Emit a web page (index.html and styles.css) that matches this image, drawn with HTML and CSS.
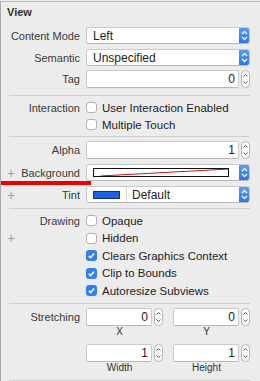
FILE: index.html
```html
<!DOCTYPE html>
<html lang="en">
<head>
    <meta charset="UTF-8">
    <meta name="viewport" content="width=device-width, initial-scale=1.0">
    <title>View Inspector</title>
    <link rel="stylesheet" href="styles.css">
</head>
<body>
    <div class="panel">
        <div class="title">View</div>

        <div class="row mt8">
            <div class="label"><span class="text">Content Mode</span></div>
            <div class="popup">
                <span class="popup-text">Left</span>
                <span class="popup-btn"><svg width="11" height="17" viewBox="0 0 11 17"><path d="M3 7 L5.5 4.5 L8 7 M3 10 L5.5 12.5 L8 10" fill="none" stroke="#fff" stroke-width="1.3"/></svg></span>
            </div>
        </div>

        <div class="row mt5">
            <div class="label"><span class="text">Semantic</span></div>
            <div class="popup">
                <span class="popup-text">Unspecified</span>
                <span class="popup-btn"><svg width="11" height="17" viewBox="0 0 11 17"><path d="M3 7 L5.5 4.5 L8 7 M3 10 L5.5 12.5 L8 10" fill="none" stroke="#fff" stroke-width="1.3"/></svg></span>
            </div>
        </div>

        <div class="row mt4">
            <div class="label"><span class="text">Tag</span></div>
            <div class="number">
                <span class="field">0</span>
                <svg class="stepper" width="9" height="18" viewBox="0 0 9 18"><rect x="0.5" y="0.5" width="8" height="17" rx="4" fill="#fff" stroke="#b3b3b3"/><path d="M2.5 6.5 L4.5 4.5 L6.5 6.5 M2.5 11.5 L4.5 13.5 L6.5 11.5" fill="none" stroke="#555" stroke-width="1"/></svg>
            </div>
        </div>

        <div class="divider mt7"></div>

        <div class="checks mt3">
            <div class="row check-row">
                <div class="label"><span class="text">Interaction</span></div>
                <label class="check"><span class="box"></span>User Interaction Enabled</label>
            </div>
            <div class="row check-row">
                <div class="label"></div>
                <label class="check"><span class="box"></span>Multiple Touch</label>
            </div>
        </div>

        <div class="divider mt3"></div>

        <div class="row mt4">
            <div class="label"><span class="text">Alpha</span></div>
            <div class="number">
                <span class="field">1</span>
                <svg class="stepper" width="9" height="18" viewBox="0 0 9 18"><rect x="0.5" y="0.5" width="8" height="17" rx="4" fill="#fff" stroke="#b3b3b3"/><path d="M2.5 6.5 L4.5 4.5 L6.5 6.5 M2.5 11.5 L4.5 13.5 L6.5 11.5" fill="none" stroke="#555" stroke-width="1"/></svg>
            </div>
        </div>

        <div class="row mt5">
            <div class="label"><span class="plus">+</span><span class="text">Background</span></div>
            <div class="popup">
                <span class="clear-swatch"><svg width="100%" height="100%" viewBox="0 0 100 10" preserveAspectRatio="none"><line x1="5" y1="10" x2="100" y2="0" stroke="#d40000" stroke-width="1.2"/></svg></span>
                <span class="popup-btn"><svg width="11" height="17" viewBox="0 0 11 17"><path d="M3 7 L5.5 4.5 L8 7 M3 10 L5.5 12.5 L8 10" fill="none" stroke="#fff" stroke-width="1.3"/></svg></span>
            </div>
        </div>

        <div class="row mt5">
            <div class="label"><span class="plus">+</span><span class="text">Tint</span></div>
            <div class="popup">
                <span class="tint-cell"><span class="tint-swatch"></span></span>
                <span class="popup-text">Default</span>
                <span class="popup-btn"><svg width="11" height="17" viewBox="0 0 11 17"><path d="M3 7 L5.5 4.5 L8 7 M3 10 L5.5 12.5 L8 10" fill="none" stroke="#fff" stroke-width="1.3"/></svg></span>
            </div>
        </div>

        <div class="divider mt5"></div>

        <div class="checks mt3">
            <div class="row check-row2">
                <div class="label"><span class="text">Drawing</span></div>
                <label class="check"><span class="box"></span>Opaque</label>
            </div>
            <div class="row check-row2">
                <div class="label"><span class="plus">+</span></div>
                <label class="check"><span class="box"></span>Hidden</label>
            </div>
            <div class="row check-row2">
                <div class="label"></div>
                <label class="check"><span class="box on"><svg width="11" height="11" viewBox="0 0 11 11"><path d="M2.8 5.8 L4.6 7.6 L8.2 3.4" fill="none" stroke="#fff" stroke-width="1.6"/></svg></span>Clears Graphics Context</label>
            </div>
            <div class="row check-row2">
                <div class="label"></div>
                <label class="check"><span class="box on"><svg width="11" height="11" viewBox="0 0 11 11"><path d="M2.8 5.8 L4.6 7.6 L8.2 3.4" fill="none" stroke="#fff" stroke-width="1.6"/></svg></span>Clip to Bounds</label>
            </div>
            <div class="row check-row2">
                <div class="label"></div>
                <label class="check"><span class="box on"><svg width="11" height="11" viewBox="0 0 11 11"><path d="M2.8 5.8 L4.6 7.6 L8.2 3.4" fill="none" stroke="#fff" stroke-width="1.6"/></svg></span>Autoresize Subviews</label>
            </div>
        </div>

        <div class="divider mt35"></div>

        <div class="row mt4 stretch-row">
            <div class="label"><span class="text">Stretching</span></div>
            <div class="pair">
                <div class="cell">
                    <div class="number">
                        <span class="field">0</span>
                        <svg class="stepper" width="9" height="18" viewBox="0 0 9 18"><rect x="0.5" y="0.5" width="8" height="17" rx="4" fill="#fff" stroke="#b3b3b3"/><path d="M2.5 6.5 L4.5 4.5 L6.5 6.5 M2.5 11.5 L4.5 13.5 L6.5 11.5" fill="none" stroke="#555" stroke-width="1"/></svg>
                    </div>
                    <div class="sub">X</div>
                </div>
                <div class="cell">
                    <div class="number">
                        <span class="field">0</span>
                        <svg class="stepper" width="9" height="18" viewBox="0 0 9 18"><rect x="0.5" y="0.5" width="8" height="17" rx="4" fill="#fff" stroke="#b3b3b3"/><path d="M2.5 6.5 L4.5 4.5 L6.5 6.5 M2.5 11.5 L4.5 13.5 L6.5 11.5" fill="none" stroke="#555" stroke-width="1"/></svg>
                    </div>
                    <div class="sub">Y</div>
                </div>
            </div>
        </div>

        <div class="row mt6 stretch-row">
            <div class="label"></div>
            <div class="pair">
                <div class="cell">
                    <div class="number">
                        <span class="field">1</span>
                        <svg class="stepper" width="9" height="18" viewBox="0 0 9 18"><rect x="0.5" y="0.5" width="8" height="17" rx="4" fill="#fff" stroke="#b3b3b3"/><path d="M2.5 6.5 L4.5 4.5 L6.5 6.5 M2.5 11.5 L4.5 13.5 L6.5 11.5" fill="none" stroke="#555" stroke-width="1"/></svg>
                    </div>
                    <div class="sub">Width</div>
                </div>
                <div class="cell">
                    <div class="number">
                        <span class="field">1</span>
                        <svg class="stepper" width="9" height="18" viewBox="0 0 9 18"><rect x="0.5" y="0.5" width="8" height="17" rx="4" fill="#fff" stroke="#b3b3b3"/><path d="M2.5 6.5 L4.5 4.5 L6.5 6.5 M2.5 11.5 L4.5 13.5 L6.5 11.5" fill="none" stroke="#555" stroke-width="1"/></svg>
                    </div>
                    <div class="sub">Height</div>
                </div>
            </div>
        </div>

        <div class="divider mt6"></div>

        <!-- annotation mark over the Background row -->
        <div class="mark"></div>
    </div>
</body>
</html>
```

FILE: styles.css
```css
body {
    margin: 0;
    background: #ececec;
    font-family: "Liberation Sans", Arial, sans-serif;
    font-size: 11px;
    color: #2b2b2b;
}
.panel {
    position: relative;
    height: 380px;
    margin-top: 1px;
    border-top: 1px solid #bcbcbc;
    border-left: 1px solid #a9a9a9;
    overflow: hidden;
}
.title {
    margin-top: 3px;
    padding-left: 6px;
    line-height: 14px;
    font-weight: bold;
    color: #333;
}
.mt3 { margin-top: 3px; }
.mt35 { margin-top: 3.5px; }
.mt4 { margin-top: 4px; }
.mt5 { margin-top: 5px; }
.mt6 { margin-top: 6px; }
.mt7 { margin-top: 7px; }
.mt8 { margin-top: 8px; }

.row {
    display: grid;
    grid-template-columns: 79px 164px;
    column-gap: 6px;
    align-items: center;
}
.label {
    display: flex;
    align-items: center;
    padding-left: 6px;
    color: #3a3a3a;
    white-space: nowrap;
}
.label .text {
    margin-left: auto;
}
.label .plus {
    color: #a0a0a0;
    font-size: 14px;
    font-weight: 300;
    line-height: 10px;
}
.divider {
    height: 1px;
    background: #cfcfcf;
    margin-left: 8px;
    margin-right: 10px;
}

.popup {
    display: flex;
    align-items: center;
    height: 17px;
    box-sizing: border-box;
    background: #fff;
    border: 1px solid #c9c9c9;
    border-bottom-color: #b8b8b8;
    border-radius: 3px;
    overflow: hidden;
}
.popup-text {
    flex: 1;
    padding-left: 6px;
    font-size: 12px;
    color: #222;
}
.popup-btn {
    margin-left: auto;
    width: 11px;
    height: 17px;
    margin-right: -1px;
    background: linear-gradient(#5a9ef9, #2672ee);
    display: flex;
}
.clear-swatch {
    display: block;
    width: 136px;
    height: 9px;
    box-sizing: border-box;
    margin-left: 6px;
    border: 1px solid #111;
    background: #fff;
}
.clear-swatch svg {
    display: block;
}
.tint-cell {
    display: flex;
    align-items: center;
    width: 40px;
    height: 15px;
    border-right: 1px solid #d6d6d6;
    box-sizing: border-box;
}
.tint-swatch {
    display: block;
    width: 27px;
    height: 8px;
    box-sizing: border-box;
    margin-left: 6px;
    background: #1b63e6;
    border: 1px solid #1d2e5a;
}
.tint-cell + .popup-text {
    padding-left: 5px;
}

.number {
    display: flex;
    align-items: center;
    gap: 2px;
}
.field {
    flex: 1;
    height: 18px;
    box-sizing: border-box;
    background: #fff;
    border: 1px solid #c9c9c9;
    border-bottom-color: #b8b8b8;
    border-radius: 2px;
    text-align: right;
    padding-right: 3px;
    font-size: 12px;
    line-height: 16px;
    color: #222;
}
.stepper {
    display: block;
    flex-shrink: 0;
}

.check-row {
    height: 17px;
}
.check-row2 {
    height: 17.5px;
}
.check {
    display: flex;
    align-items: center;
    gap: 5px;
    font-size: 11.5px;
    color: #222;
    white-space: nowrap;
}
.box {
    display: block;
    flex-shrink: 0;
    width: 11px;
    height: 11px;
    box-sizing: border-box;
    border: 1px solid #b1b1b1;
    border-radius: 3px;
    background: #fff;
}
.box.on {
    border: none;
    background: #2f7ef4;
}
.box svg {
    display: block;
}

.stretch-row {
    align-items: start;
}
.stretch-row .label {
    height: 18px;
}
.pair {
    display: grid;
    grid-template-columns: 77px 77px;
    column-gap: 10px;
}
.sub {
    width: 67px;
    text-align: center;
    font-size: 10px;
    line-height: 12px;
    color: #333;
}

.mark {
    position: absolute;
    left: -1px;
    top: 179px;
    width: 91px;
    height: 4px;
    background: #ee0000;
}
```
